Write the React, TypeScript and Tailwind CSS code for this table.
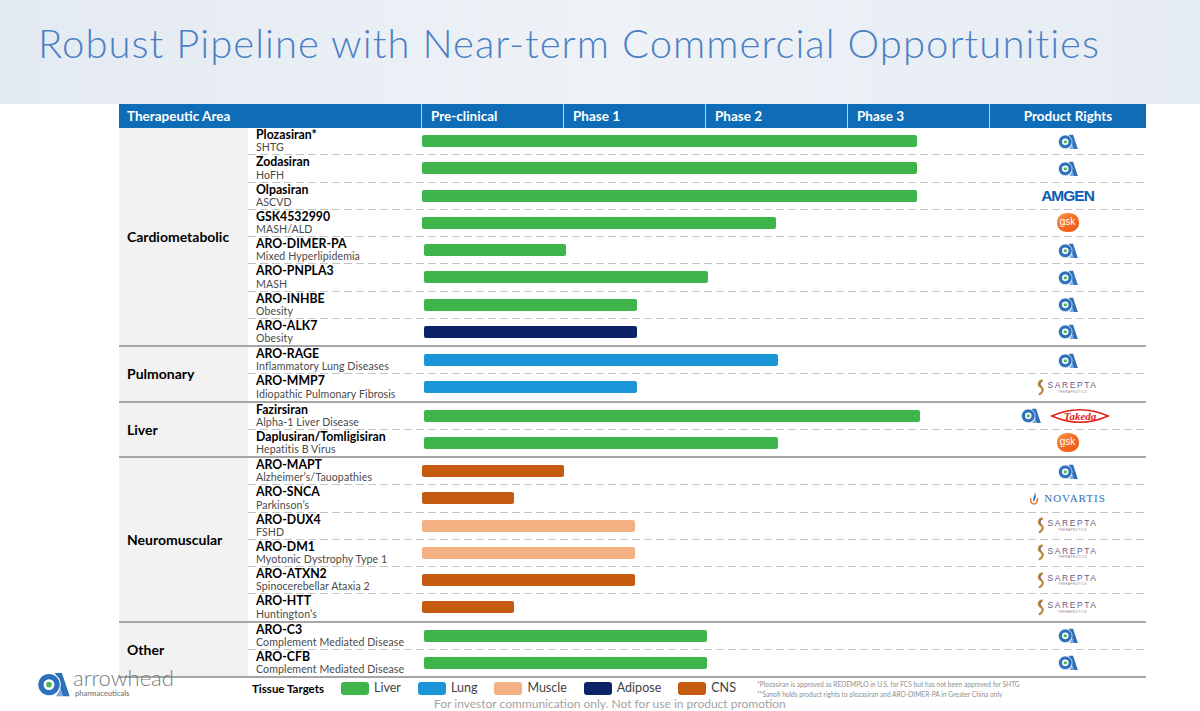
import React from 'react';

type Rights = 'arrow' | 'amgen' | 'gsk' | 'sarepta' | 'takeda' | 'novartis';

interface Drug {
  name: string;
  ind: string;
  start: number;
  end: number;
  color: string;
  rights: Rights;
}

interface Group {
  area: string;
  drugs: Drug[];
}

const LIVER = '#3db54a';
const LUNG = '#1a96d8';
const MUSCLE = '#f4b183';
const ADIPOSE = '#0b2468';
const CNS = '#c55a11';

// bar positions are page x coords, pipeline column starts at 421
const groups: Group[] = [
  {
    area: 'Cardiometabolic',
    drugs: [
      { name: 'Plozasiran*', ind: 'SHTG', start: 422, end: 917, color: LIVER, rights: 'arrow' },
      { name: 'Zodasiran', ind: 'HoFH', start: 422, end: 917, color: LIVER, rights: 'arrow' },
      { name: 'Olpasiran', ind: 'ASCVD', start: 422, end: 917, color: LIVER, rights: 'amgen' },
      { name: 'GSK4532990', ind: 'MASH/ALD', start: 422, end: 776, color: LIVER, rights: 'gsk' },
      { name: 'ARO-DIMER-PA', ind: 'Mixed Hyperlipidemia', start: 424, end: 566, color: LIVER, rights: 'arrow' },
      { name: 'ARO-PNPLA3', ind: 'MASH', start: 424, end: 708, color: LIVER, rights: 'arrow' },
      { name: 'ARO-INHBE', ind: 'Obesity', start: 424, end: 637, color: LIVER, rights: 'arrow' },
      { name: 'ARO-ALK7', ind: 'Obesity', start: 424, end: 637, color: ADIPOSE, rights: 'arrow' },
    ],
  },
  {
    area: 'Pulmonary',
    drugs: [
      { name: 'ARO-RAGE', ind: 'Inflammatory Lung Diseases', start: 424, end: 778, color: LUNG, rights: 'arrow' },
      { name: 'ARO-MMP7', ind: 'Idiopathic Pulmonary Fibrosis', start: 424, end: 637, color: LUNG, rights: 'sarepta' },
    ],
  },
  {
    area: 'Liver',
    drugs: [
      { name: 'Fazirsiran', ind: 'Alpha-1 Liver Disease', start: 424, end: 920, color: LIVER, rights: 'takeda' },
      { name: 'Daplusiran/Tomligisiran', ind: 'Hepatitis B Virus', start: 424, end: 778, color: LIVER, rights: 'gsk' },
    ],
  },
  {
    area: 'Neuromuscular',
    drugs: [
      { name: 'ARO-MAPT', ind: 'Alzheimer’s/Tauopathies', start: 422, end: 564, color: CNS, rights: 'arrow' },
      { name: 'ARO-SNCA', ind: 'Parkinson’s', start: 422, end: 514, color: CNS, rights: 'novartis' },
      { name: 'ARO-DUX4', ind: 'FSHD', start: 422, end: 635, color: MUSCLE, rights: 'sarepta' },
      { name: 'ARO-DM1', ind: 'Myotonic Dystrophy Type 1', start: 422, end: 635, color: MUSCLE, rights: 'sarepta' },
      { name: 'ARO-ATXN2', ind: 'Spinocerebellar Ataxia 2', start: 422, end: 635, color: CNS, rights: 'sarepta' },
      { name: 'ARO-HTT', ind: 'Huntington’s', start: 422, end: 514, color: CNS, rights: 'sarepta' },
    ],
  },
  {
    area: 'Other',
    drugs: [
      { name: 'ARO-C3', ind: 'Complement Mediated Disease', start: 424, end: 707, color: LIVER, rights: 'arrow' },
      { name: 'ARO-CFB', ind: 'Complement Mediated Disease', start: 424, end: 707, color: LIVER, rights: 'arrow' },
    ],
  },
];

const ArrowheadMark: React.FC<{ className?: string }> = ({ className = 'w-[20px] h-[17px]' }) => (
  <svg viewBox="0 0 22 18" className={className}>
    <path d="M12 1.6 L16.6 1.6 L21.8 17.2 L17.2 17.2 Z" fill="#2f70bd" />
    <path d="M12.6 17.2 L17.2 17.2 L15.6 12.4 Z" fill="#7aa7dc" />
    <circle cx="8" cy="9.4" r="7.5" fill="#2f70bd" stroke="#ffffff" strokeWidth="0.7" />
    <circle cx="8" cy="9.4" r="3.6" fill="#ffffff" />
    <circle cx="8" cy="9.4" r="1.9" fill="#4fb553" />
  </svg>
);

const Amgen = () => (
  <span className="font-['Liberation_Sans',sans-serif] text-[15.5px] font-bold tracking-[-1px] text-[#0b5cb5] leading-none">
    AMGEN
  </span>
);

const Gsk = () => (
  <div className="w-[22px] h-[19px] rounded-[45%] bg-gradient-to-br from-[#f79a45] via-[#f36b21] to-[#ec5a1d] flex items-center justify-center">
    <span className="font-['Liberation_Sans',sans-serif] text-[10px] text-white leading-none -mt-px">gsk</span>
  </div>
);

const Sarepta = () => (
  <div className="flex items-center gap-[2px]">
    <svg viewBox="0 0 9 18" className="w-[8px] h-[17px]">
      <path d="M6.5 1 C1 2 1 6.5 4.5 8.5 C8 10.5 6.5 15 2 17" stroke="#b8893a" strokeWidth="2.4" fill="none" />
      <path d="M5.5 2.2 C3 3.2 3 6.3 5 7.8" stroke="#4e2f5e" strokeWidth="0.9" fill="none" />
    </svg>
    <div className="flex flex-col items-center leading-none">
      <span className="font-['Liberation_Sans',sans-serif] text-[8.5px] tracking-[1.6px] text-[#6e5a86]">SAREPTA</span>
      <span className="font-['Liberation_Sans',sans-serif] text-[3px] tracking-[0.5px] text-[#8a7a9a] mt-[1px]">THERAPEUTICS</span>
    </div>
  </div>
);

const Takeda = () => (
  <svg viewBox="0 0 60 20" className="w-[60px] h-[20px]">
    <path d="M2 10 Q30 -2.5 58 10 Q30 22.5 2 10 Z" fill="none" stroke="#e2231a" strokeWidth="1.6" />
    <text x="30" y="13.8" textAnchor="middle" fontFamily="'Liberation Serif', serif" fontStyle="italic" fontWeight="bold" fontSize="11" fill="#e2231a">
      Takeda
    </text>
  </svg>
);

const Novartis = () => (
  <div className="flex items-center gap-[5px]">
    <svg viewBox="0 0 10 14" className="w-[10px] h-[14px]">
      <path d="M1.5 7 C1.5 11 3 13 5 13 C7 13 8.5 11 8.5 7" stroke="#e8752a" strokeWidth="1.5" fill="none" />
      <path d="M5 11 C3.5 9 4.5 6 5.5 4 C6.5 2 5.5 1 5 0.5 C7.5 2.5 7 6 6 8 C5.5 9.5 5.5 10.5 5 11 Z" fill="#2f6fb5" />
    </svg>
    <span className="font-['Liberation_Serif',serif] text-[11px] tracking-[1px] text-[#2f6fb5] leading-none">NOVARTIS</span>
  </div>
);

const RightsCell: React.FC<{ rights: Rights }> = ({ rights }) => {
  if (rights === 'arrow') return <ArrowheadMark />;
  if (rights === 'amgen') return <Amgen />;
  if (rights === 'gsk') return <Gsk />;
  if (rights === 'sarepta') return <Sarepta />;
  if (rights === 'novartis') return <Novartis />;
  return (
    <div className="flex items-center gap-[9px] -ml-[4px]">
      <ArrowheadMark />
      <Takeda />
    </div>
  );
};

const dashed = 'h-px bg-[repeating-linear-gradient(90deg,#c4c4c4_0_8px,transparent_8px_12px)]';

const DrugRow: React.FC<{ drug: Drug }> = ({ drug }) => (
  <div className="flex h-[26.25px] items-center">
    <div className="w-[173px] pl-[8px] flex flex-col justify-center leading-none">
      <span className="text-[12.3px] font-bold text-black">{drug.name}</span>
      <span className="text-[10.6px] text-[#4a4a4a] mt-[1px] tracking-[0.1px]">{drug.ind}</span>
    </div>
    <div className="w-[568px] h-full flex items-center">
      <div
        className="h-[12px] rounded-[2px]"
        style={{ marginLeft: drug.start - 421, width: drug.end - drug.start, backgroundColor: drug.color }}
      />
    </div>
    <div className="w-[157px] flex justify-center items-center">
      <RightsCell rights={drug.rights} />
    </div>
  </div>
);

const GroupBlock: React.FC<{ group: Group }> = ({ group }) => (
  <div className="flex border-b-2 border-[#a6a6a6]">
    <div className="w-[129px] bg-[#f2f2f2] flex items-center pl-[8px] text-[14px] font-bold text-black">
      {group.area}
    </div>
    <div className="flex flex-col">
      {group.drugs.map((d, i) => (
        <React.Fragment key={d.name}>
          {i > 0 && <div className={dashed} />}
          <DrugRow drug={d} />
        </React.Fragment>
      ))}
    </div>
  </div>
);

const legend = [
  { label: 'Liver', color: LIVER },
  { label: 'Lung', color: LUNG },
  { label: 'Muscle', color: MUSCLE },
  { label: 'Adipose', color: ADIPOSE },
  { label: 'CNS', color: CNS },
];

export default function App() {
  return (
    <div className="relative w-[1200px] h-[711px] overflow-hidden bg-white font-['Lato',sans-serif]">
      <div className="h-[104px] bg-gradient-to-r from-[#e4eaf2] via-[#eef2f7] to-[#e6ecf3] pl-[38px] pt-[23px]">
        <h1 className="text-[40px] font-light text-[#4a80c4] leading-none tracking-[1.05px]">
          Robust Pipeline with Near-term Commercial Opportunities
        </h1>
      </div>

      <div className="ml-[119px] w-[1027px]">
        <div className="flex h-[24px] bg-[#0f6cb6] text-white text-[13.5px] font-bold items-center">
          <div className="w-[302px] pl-[8px]">Therapeutic Area</div>
          <div className="w-[142px] h-full flex items-center pl-[9px] border-l border-white/70">Pre-clinical</div>
          <div className="w-[142px] h-full flex items-center pl-[9px] border-l border-white/70">Phase 1</div>
          <div className="w-[142px] h-full flex items-center pl-[9px] border-l border-white/70">Phase 2</div>
          <div className="w-[142px] h-full flex items-center pl-[9px] border-l border-white/70">Phase 3</div>
          <div className="w-[157px] h-full flex items-center justify-center border-l border-white/70">Product Rights</div>
        </div>
        {groups.map((g) => (
          <GroupBlock key={g.area} group={g} />
        ))}
      </div>

      <div className="flex items-center h-[19px] mt-[1px]">
        <div className="ml-[252px] text-[11.5px] font-bold text-black mr-[17px]">Tissue Targets</div>
        {legend.map((l) => (
          <div key={l.label} className="flex items-center mr-[17px]">
            <div className="w-[28px] h-[13px] rounded-[3px] mr-[5px]" style={{ backgroundColor: l.color }} />
            <span className="text-[12.5px] text-[#404040]">{l.label}</span>
          </div>
        ))}
        <div className="ml-[4px] flex flex-col text-[6.6px] text-[#8f8f8f] leading-[10px]">
          <span>*Plozasiran is approved as REDEMPLO in U.S. for FCS but has not been approved for SHTG</span>
          <span>**Sanofi holds product rights to plozasiran and ARO-DIMER-PA in Greater China only</span>
        </div>
      </div>

      <div className="ml-[434px] text-[12px] text-[#a3a3a3] leading-[12px]">
        For investor communication only. Not for use in product promotion
      </div>

      <div className="absolute left-[37px] top-[670px] flex items-start gap-[3px]">
        <ArrowheadMark className="w-[33px] h-[28px]" />
        <div className="flex flex-col leading-none -mt-[3px]">
          <span className="text-[22px] font-light text-[#7a7a7a]">arrowhead</span>
          <span className="text-[7.5px] font-bold text-[#8a8a8a] ml-[2px] mt-[1px]">pharmaceuticals</span>
        </div>
      </div>
    </div>
  );
}
